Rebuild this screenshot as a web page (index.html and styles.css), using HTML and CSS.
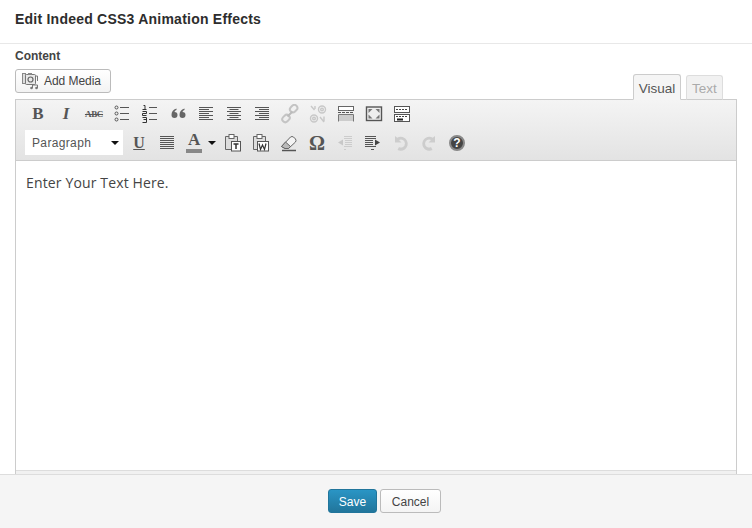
FILE: index.html
```html
<!DOCTYPE html>
<html lang="en">
<head>
<meta charset="utf-8">
<title>Edit Indeed CSS3 Animation Effects</title>
<link rel="stylesheet" href="styles.css">
</head>
<body>
<div class="modal">
  <header class="head"><h1>Edit Indeed CSS3 Animation Effects</h1></header>
  <main class="body">
    <div class="label">Content</div>
    <div class="bar">
      <button class="media">
        <svg class="mi" width="18" height="18" viewBox="0 0 18 18"><rect x="0.5" y="1.5" width="3" height="10" fill="#ddd" stroke="#888"/><rect x="3.5" y="2.5" width="10" height="10" rx="1" fill="#e8e8e8" stroke="#777"/><circle cx="8.5" cy="7.5" r="2.5" fill="none" stroke="#666" stroke-width="1.2"/><rect x="6" y="1" width="4" height="2" fill="#888"/><path d="M14 4h1.500v5M10.500 16v-3h5v3" fill="none" stroke="#777"/><circle cx="9.500" cy="16" r="1.300" fill="#777"/><circle cx="14.500" cy="16" r="1.300" fill="#777"/></svg>
        Add Media
      </button>
      <div class="tabs"><span class="tab on">Visual</span><span class="tab">Text</span></div>
    </div>
    <div class="editor">
      <div class="tools">
        <div class="row r1">
          <span class="b"><span class="g bold">B</span></span>
          <span class="b"><span class="g ital">I</span></span>
          <span class="b"><span class="g abc">ABC</span></span>
          <span class="b"><svg width="20" height="20" viewBox="0 0 20 20"><g class="ln"><path d="M8 3.500h9M8 9.500h9M8 15.500h9"/></g><g fill="none" stroke="#555"><circle cx="4.500" cy="3.500" r="1.500"/><circle cx="4.500" cy="9.500" r="1.500"/><circle cx="4.500" cy="15.500" r="1.500"/></g></svg></span>
          <span class="b"><svg width="20" height="20" viewBox="0 0 20 20"><g class="ln"><path d="M9 3.500h8M9 9.500h8M9 15.500h8"/></g><path d="M3.500 1.500h1.500v4M2.500 5.500h4M2.500 7.500h4v2h-4v2h4M2.500 13.500h4v5h-4M3.500 15.500h3" fill="none" stroke="#333"/></svg></span>
          <span class="b"><svg width="20" height="20" viewBox="0 0 20 20"><path d="M8.500 4.500C5 5.500 3.500 8 3.500 11a3 3 0 1 0 3-3c.3-1 1-1.700 2-2zM16.500 4.500C13 5.500 11.500 8 11.500 11a3 3 0 1 0 3-3c.3-1 1-1.700 2-2z" fill="#666"/></svg></span>
          <span class="b"><svg width="20" height="20" viewBox="0 0 20 20"><g class="ln"><path d="M3 3.500h14M3 5.500h10M3 7.500h14M3 9.500h10M3 11.500h14M3 13.500h10M3 15.500h14"/></g></svg></span>
          <span class="b"><svg width="20" height="20" viewBox="0 0 20 20"><g class="ln"><path d="M3 3.500h14M5.500 5.500h9M3 7.500h14M5.500 9.500h9M3 11.500h14M5.500 13.500h9M3 15.500h14"/></g></svg></span>
          <span class="b"><svg width="20" height="20" viewBox="0 0 20 20"><g class="ln"><path d="M3 3.500h14M7 5.500h10M3 7.500h14M7 9.500h10M3 11.500h14M7 13.500h10M3 15.500h14"/></g></svg></span>
          <span class="b"><svg width="20" height="20" viewBox="0 0 20 20"><g fill="none" stroke="#c4c4c4" stroke-width="2"><rect x="10" y="1.500" width="8" height="6" rx="3" transform="rotate(-45 14 5)"/><rect x="2" y="11.500" width="8" height="6" rx="3" transform="rotate(-45 6 14.500)"/><path d="M7.500 12.500l5-5" stroke="#bbb"/></g></svg></span>
          <span class="b"><svg width="20" height="20" viewBox="0 0 20 20"><g fill="none" stroke="#c8c8c8" stroke-width="1.400"><circle cx="14" cy="5.500" r="3.500"/><circle cx="14" cy="5.500" r="1.300"/><circle cx="6" cy="14.500" r="3.500"/><circle cx="6" cy="14.500" r="1.300"/><path d="M3 2l3.500 4M7 2v3M12 13l4 5M16 12.500v5"/></g></svg></span>
          <span class="b"><svg width="20" height="20" viewBox="0 0 20 20"><rect x="2.500" y="2.500" width="15" height="4" fill="#fff" stroke="#666"/><path d="M2 8.500h16" stroke="#555" stroke-dasharray="3 1"/><rect x="2.500" y="11" width="15" height="6" fill="#ccc"/><path d="M2.500 17.500v-7M17.500 17.500v-7M2.500 10.500h15" stroke="#777" fill="none"/></svg></span>
          <span class="b"><svg width="20" height="20" viewBox="0 0 20 20"><rect x="2.500" y="3" width="15" height="13.500" fill="#eee" stroke="#555" stroke-width="1.400"/><path d="M4.500 5h4L4.500 9zM15.500 5h-4l4 4zM4.500 14.500h4l-4-4zM15.500 14.500h-4l4-4z" fill="#777"/></svg></span>
          <span class="b"><svg width="20" height="20" viewBox="0 0 20 20"><rect x="2.500" y="2.500" width="15" height="6" fill="#fff" stroke="#555"/><rect x="2.500" y="10.500" width="15" height="7" fill="#fff" stroke="#555"/><path d="M4 5.500h12M4 12.500h12" stroke="#444" stroke-dasharray="2 1"/><rect x="5" y="14.500" width="6" height="2" fill="#222"/></svg></span>
        </div>
        <div class="row r2">
          <span class="sel">Paragraph<i class="arrow"></i></span>
          <span class="b"><span class="g und">U</span></span>
          <span class="b"><svg width="20" height="20" viewBox="0 0 20 20"><g class="ln"><path d="M3 3.500h14M3 5.500h14M3 7.500h14M3 9.500h14M3 11.500h14M3 13.500h14M3 15.500h14"/></g></svg></span>
          <span class="b color"><span class="g cola">A</span><i class="swatch"></i><i class="arrow small"></i></span>
          <span class="b"><svg width="20" height="20" viewBox="0 0 20 20"><path d="M2.500 3.500h12v13h-12z" fill="#ddd" stroke="#666"/><rect x="6" y="1.500" width="5" height="4" fill="#fff" stroke="#666"/><rect x="8.500" y="8.500" width="9" height="9.500" fill="#fff" stroke="#555"/><path d="M10.500 11h5M13 11v5" stroke="#333" stroke-width="1.500"/></svg></span>
          <span class="b"><svg width="20" height="20" viewBox="0 0 20 20"><path d="M2.500 3.500h12v13h-12z" fill="#ddd" stroke="#666"/><rect x="6" y="1.500" width="5" height="4" fill="#fff" stroke="#666"/><rect x="6.500" y="8.500" width="11" height="9.500" fill="#fff" stroke="#555"/><path d="M8 10.500l1.500 6 2-4.500 2 4.500 1.500-6" fill="none" stroke="#333" stroke-width="1.200"/></svg></span>
          <span class="b"><svg width="20" height="20" viewBox="0 0 20 20"><path d="M2.500 13.500l9-9.500q1.500-1 3 0l2 2q1 1.500 0 3l-7 6.500H6z" fill="#f4f4f4" stroke="#666"/><path d="M2.500 13.500L6 15.500h3.500l2-2L6.500 9z" fill="#bbb" stroke="#666"/><path d="M3 17.500h14" stroke="#555" stroke-width="1.500"/></svg></span>
          <span class="b"><span class="g omega">Ω</span></span>
          <span class="b"><svg width="20" height="20" viewBox="0 0 20 20"><g class="off"><path d="M9 3.500h8M9 5.500h8M10 7.500h7M10 9.500h7M10 11.500h7M9 13.500h8M9 16.500h2"/></g><path d="M8 6.500l-5 3 5 3z" fill="#c8c8c8"/></svg></span>
          <span class="b"><svg width="20" height="20" viewBox="0 0 20 20"><g class="ln"><path d="M2 3.500h11M2 5.500h11M2 7.500h8M2 9.500h8M2 11.500h8M2 13.500h11M8 16.500h3"/></g><path d="M12 6.500l5 3-5 3z" fill="#444"/></svg></span>
          <span class="b"><svg width="20" height="20" viewBox="0 0 20 20"><path d="M4 3v6.500h6.500L8 7a4 4 0 1 1 0 7l-1.500 3a7 7 0 1 0-.3-12.300z" fill="#cdcdcd"/></svg></span>
          <span class="b"><svg width="20" height="20" viewBox="0 0 20 20"><path d="M16 3v6.500H9.500L12 7a4 4 0 1 0 0 7l1.500 3a7 7 0 1 1 .3-12.300z" fill="#cdcdcd"/></svg></span>
          <span class="b"><svg width="20" height="20" viewBox="0 0 20 20"><circle cx="10" cy="10" r="7" fill="#444" stroke="#888" stroke-width="2"/><text x="10" y="14" class="q">?</text></svg></span>
        </div>
      </div>
      <div class="text">Enter Your Text Here.</div>
      <div class="status"></div>
    </div>
  </main>
  <footer class="foot">
    <button class="btn save">Save</button>
    <button class="btn cancel">Cancel</button>
  </footer>
</div>
</body>
</html>
```
FILE: styles.css
```css
* { box-sizing: border-box; }
html, body { margin: 0; height: 100%; }
body { background: #fff; font-family: "Liberation Sans", Arial, sans-serif; color: #333; overflow: hidden; }
.modal { width: 752px; height: 528px; display: flex; flex-direction: column; }
.head { height: 44px; border-bottom: 1px solid #e8e8e8; padding: 11px 15px 0; flex: none; }
.head h1 { margin: 0; font-size: 14px; line-height: 16px; font-weight: bold; color: #2d2d2d; letter-spacing: .23px; }
.body { flex: 1; min-height: 0; padding: 4px 15px 0; display: flex; flex-direction: column; }
.label { font-size: 12px; line-height: 16px; font-weight: bold; color: #444; height: 21px; letter-spacing: -.03px; }
.bar { display: flex; justify-content: space-between; align-items: flex-end; height: 31px; flex: none; position: relative; z-index: 1; margin-bottom: -1px; }
.media { align-self: flex-start; margin: 0; width: 96px; height: 24px; border: 1px solid #bbb; border-radius: 3px; background: linear-gradient(#fff, #f3f3f3); display: flex; align-items: center; gap: 4px; padding: 0 0 0 6px; font: 12px "Liberation Sans", Arial, sans-serif; color: #444; letter-spacing: -.05px; }
.mi { flex: none; }
.tabs { display: flex; gap: 5px; margin-right: 14px; align-items: flex-end; }
.tab { width: 37px; height: 25px; border: 1px solid #ddd; border-bottom: 1px solid #ccc; border-radius: 3px 3px 0 0; background: #f1f1f1; color: #aaa; font-size: 13.5px; line-height: 26px; text-align: center; }
.tab.on { width: 48px; height: 26px; background: #f5f5f5; color: #555; border-color: #ccc; border-bottom-color: #f5f5f5; line-height: 27px; }
.editor { flex: 1; min-height: 0; border: 1px solid #ccc; border-bottom: 0; display: flex; flex-direction: column; }
.tools { height: 61px; flex: none; border-bottom: 1px solid #ccc; background: linear-gradient(#f4f4f4, #e3e3e3); padding: 0 8px; }
.row { display: flex; align-items: center; }
.r1 { height: 28px; }
.r2 { height: 29px; padding: 0 0 0 1px; }
.b { width: 28px; height: 24px; display: flex; align-items: center; justify-content: center; flex: none; position: relative; }
.ln path, .off path { fill: none; stroke: #555; }
.off path { stroke: #ccc; }
.g { font-family: "Liberation Serif", serif; font-weight: bold; color: #555; line-height: 20px; }
.bold { font-size: 17px; }
.ital { font-size: 17px; font-style: italic; }
.abc { font-size: 9px; text-decoration: line-through; letter-spacing: -.3px; }
.und { font-size: 16px; text-decoration: underline; }
.omega { font-size: 20px; }
.sel { width: 98px; height: 25px; background: #fff; color: #555; font-size: 12px; line-height: 27px; padding-left: 7px; letter-spacing: .35px; margin: 0 2px 0 0; position: relative; flex: none; }
.arrow { position: absolute; right: 4px; top: 11px; border: 4px solid transparent; border-top-color: #111; border-bottom: 0; }
.color { width: 38px; justify-content: flex-start; }
.color .cola { font-size: 17px; margin: -5px 0 0 7px; }
.swatch { position: absolute; left: 5px; bottom: 2px; width: 16px; height: 4px; background: #888; }
.arrow.small { right: 3px; top: 10px; }
.q { font: bold 12px "Liberation Sans", Arial, sans-serif; fill: #fff; text-anchor: middle; }
.text { flex: 1; padding: 12px 10px 0; font: 14px/19px "Open Sans", sans-serif; color: #444; background: #fff; letter-spacing: .14px; }
.status { height: 4px; flex: none; background: #f1f1f1; border-top: 1px solid #ddd; }
.foot { height: 54px; flex: none; background: #f5f5f5; border-top: 1px solid #ddd; display: flex; justify-content: center; align-items: flex-start; gap: 3px; padding: 14px 0 0 17px; }
.btn { margin: 0; height: 24px; border-radius: 3px; font: 12px "Liberation Sans", Arial, sans-serif; padding: 1px 0 0; }
.save { width: 49px; background: linear-gradient(#2a95c5, #21759b); border: 1px solid #21759b; color: #fff; }
.cancel { width: 61px; background: linear-gradient(#fff, #f4f4f4); border: 1px solid #bbb; color: #444; }
```
